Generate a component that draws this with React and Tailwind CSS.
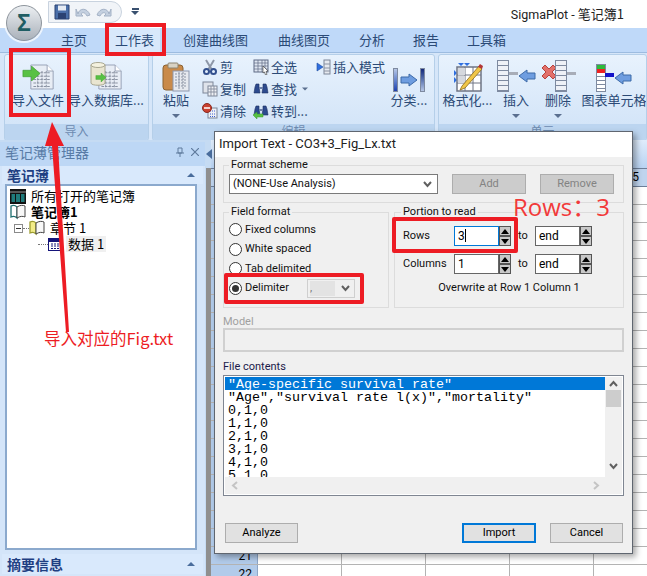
const cjk = { fontFamily: '"Noto Sans CJK SC","Noto Sans",sans-serif' };
const ui = { fontFamily: 'Roboto,"Noto Sans CJK SC",sans-serif' };

function Sheet({ w = 28, h = 30, className = "" }) {
  return (
    <svg width={w} height={h} viewBox="0 0 28 30" className={className}>
      <path d="M1 1h19l7 7v21H1z" fill="#e8edf5" stroke="#8d97ad" />
      <path d="M20 1v7h7" fill="#fff" stroke="#8d97ad" />
      <path d="M4 10h20M4 14h20M4 18h20M4 22h20M4 26h20M9 8v20M14 8v20M19 8v20" stroke="#8b93a3" strokeWidth="1.2" strokeDasharray="3 1" />
    </svg>
  );
}
function GreenArrow({ w = 16, h = 14 }) {
  return (
    <svg width={w} height={h} viewBox="0 0 16 14">
      <path d="M0 4h8V0l8 7-8 7v-4H0z" fill="#58c144" stroke="#3c9a2e" strokeWidth=".6" />
    </svg>
  );
}
function BlueLeft({ flip }) {
  return (
    <svg width="18" height="14" viewBox="0 0 18 14" className={flip ? "-scale-x-100" : ""}>
      <path d="M17 4H9V1L1 7l8 6v-3h8z" fill="#6e9de0" stroke="#3d6aa8" />
    </svg>
  );
}
function ImportIcon() {
  return (
    <div className="relative w-[32px] h-[30px]">
      <div className="absolute left-[8px] top-0"><Sheet w={24} h={30} /></div>
      <div className="absolute left-0 top-[4px]"><GreenArrow w={19} h={15} /></div>
    </div>
  );
}
function DbIcon() {
  return (
    <div className="relative w-[32px] h-[30px]">
      <div className="absolute left-[8px] top-0"><Sheet w={24} h={30} /></div>
      <svg className="absolute left-0 top-0" width="16" height="24" viewBox="0 0 16 24">
        <path d="M1 3v18c0 3 14 3 14 0V3z" fill="#e9e5d0" stroke="#a8a690" />
        <ellipse cx="8" cy="3" rx="7" ry="2.5" fill="#f4f1de" stroke="#a8a690" />
      </svg>
      <div className="absolute left-[5px] top-[11px]"><GreenArrow w={12} h={9} /></div>
    </div>
  );
}
function PasteIcon() {
  return (
    <svg width="28" height="30" viewBox="0 0 28 30">
      <rect x="1" y="3" width="20" height="25" rx="3" fill="#c98a4a" stroke="#8a6233" />
      <rect x="6" y="1" width="10" height="5" rx="1" fill="#d8d2c4" stroke="#8d8471" />
      <rect x="11" y="9" width="16" height="20" fill="#e6e9ef" stroke="#8d97ad" />
      <path d="M13 12h12M13 15h12M13 18h12M13 21h12M13 24h12M17 10v18M21 10v18" stroke="#8b93a3" strokeDasharray="2 1" />
    </svg>
  );
}
function Small({ kind }) {
  const p = { width: 16, height: 16, viewBox: "0 0 16 16" };
  if (kind === "cut")
    return (
      <svg {...p}>
        <path d="M4 1l6 10M12 1L6 11" stroke="#8e97a8" strokeWidth="2" />
        <circle cx="4.5" cy="12.5" r="2.5" fill="none" stroke="#33508e" strokeWidth="2" />
        <circle cx="11.5" cy="12.5" r="2.5" fill="none" stroke="#33508e" strokeWidth="2" />
      </svg>
    );
  if (kind === "copy")
    return (
      <svg {...p}>
        <rect x="1" y="1" width="10" height="11" fill="#dfe3ea" stroke="#7d8698" />
        <rect x="6" y="5" width="9" height="10" fill="#f0f2f6" stroke="#7d8698" />
        <path d="M6 8h9M6 11h9M9 5v10M12 5v10" stroke="#8b93a3" />
      </svg>
    );
  if (kind === "clear")
    return (
      <svg {...p}>
        <rect x="6" y="5" width="9" height="10" fill="#eef0f5" stroke="#7d8698" />
        <path d="M8 8h6M8 11h6M8 13.500h6" stroke="#3a5fd0" strokeDasharray="1 1" />
        <circle cx="5" cy="5" r="4.500" fill="#c9402f" stroke="#8a2a20" />
        <path d="M2 5h6" stroke="#fff" strokeWidth="1.600" />
      </svg>
    );
  if (kind === "all")
    return (
      <svg {...p}>
        <rect x="1" y="1" width="14" height="12" fill="#dfe6f2" stroke="#5e6b85" />
        <path d="M1 4h14M1 7h14M1 10h14M5 1v12M9 1v12M12 1v12" stroke="#5e6b85" strokeWidth=".7" />
        <path d="M10 7l5 5-2 .5 1 3-1.500.5-1-3-1.500 1z" fill="#fff" stroke="#333" strokeWidth=".6" />
      </svg>
    );
  if (kind === "find" || kind === "goto")
    return (
      <svg {...p}>
        <path d="M3 3h3v3l1 6H1l1-6zM10 3h3l1 3 1 6H9l1-6z" fill="#2c4a8e" stroke="#1d2f63" strokeWidth=".6" />
        <rect x="6" y="6" width="4" height="2" fill="#6c7fa8" />
        {kind === "goto" && <path d="M0 12l4-3v2h6v3H4v2z" fill="#58c144" stroke="#3c9a2e" strokeWidth=".5" />}
      </svg>
    );
  return (
    <svg {...p}>
      <rect x="9" y="1" width="6" height="14" fill="#e6e9ef" stroke="#7d8698" />
      <path d="M9 5h6M9 9h6M9 12h6" stroke="#8b93a3" />
      <path d="M2 4l6 4-6 4z" fill="#2f6fe0" stroke="#1d4a9c" strokeWidth=".6" />
    </svg>
  );
}
function Column({ n = 7, fill = "#eef1f7", children, w = 12 }) {
  return (
    <div className="flex flex-col border border-[#7e8aa0] bg-white" style={{ width: w }}>
      {Array.from({ length: n }).map((_, i) => (
        <div key={i} className="h-[5px] border-b border-[#7e8aa0]" style={{ background: fill }} />
      ))}
      {children}
    </div>
  );
}
function CaretDown({ className = "" }) {
  return <div className={`w-0 h-0 border-x-[4px] border-x-transparent border-t-[4px] border-t-[#5a6f8f] ${className}`} />;
}
function BigBtn({ icon, label, w, caret }) {
  return (
    <div className="flex flex-col items-center shrink-0" style={{ width: w }}>
      <div className="h-[37px] flex items-end justify-center">{icon}</div>
      <div className="text-[13px] leading-[18px] -mt-[1px] whitespace-nowrap text-[#2b4a76]" style={cjk}>{label}</div>
      {caret && <CaretDown className="mt-[5px]" />}
    </div>
  );
}
function SmallBtn({ kind, label, caret, w }) {
  return (
    <div className="flex items-center gap-[2px] h-[22px] whitespace-nowrap" style={{ width: w }}>
      <Small kind={kind} />
      <span className="text-[13px] text-[#2b4a76]" style={cjk}>{label}</span>
      {caret && <CaretDown className="scale-75 ml-[2px]" />}
    </div>
  );
}
function Group({ w, caption, children, className = "" }) {
  return (
    <div className="shrink-0 h-[87px] rounded-[3px] border border-[#b5cfe9] bg-gradient-to-b from-[#e8f2fd] to-[#cfe2f7] flex flex-col overflow-hidden" style={{ width: w }}>
      <div className={`h-[70px] flex ${className}`}>{children}</div>
      <div className="h-[16px] bg-[#bcd5f0] text-center text-[12px] leading-[14px] text-[#6d8bb0]" style={cjk}>{caption}</div>
    </div>
  );
}

function Ribbon() {
  return (
    <div className="h-[88px] bg-[#d6e6f9] flex gap-[3px] pl-[4px] pt-[1px] border-t border-[#9dbce0]">
      <Group w={145} caption="导入" className="pl-[3px]">
        <BigBtn icon={<ImportIcon />} label="导入文件" w={60} />
        <BigBtn icon={<DbIcon />} label="导入数据库..." w={76} />
      </Group>
      <Group w={283} caption="编辑" className="pl-[10px]">
        <BigBtn icon={<PasteIcon />} label="粘贴" w={26} caret />
        <div className="flex flex-col ml-[13px] pt-[1px]">
          <SmallBtn kind="cut" label="剪" w={51} />
          <SmallBtn kind="copy" label="复制" w={51} />
          <SmallBtn kind="clear" label="清除" w={51} />
        </div>
        <div className="flex flex-col pt-[1px]">
          <SmallBtn kind="all" label="全选" w={62} />
          <SmallBtn kind="find" label="查找" caret w={62} />
          <SmallBtn kind="goto" label="转到..." w={62} />
        </div>
        <div className="flex flex-col pt-[1px]">
          <SmallBtn kind="insert" label="插入模式" w={76} />
        </div>
        <BigBtn
          w={36}
          label="分类..."
          icon={
            <div className="flex items-center gap-[2px]">
              <div className="w-[5px] h-[24px] bg-gradient-to-b from-[#b6c6e6] to-[#1f3fb0] border border-[#7e8aa0]" />
              <BlueLeft flip />
              <div className="w-[5px] h-[24px] bg-gradient-to-b from-[#14277a] to-[#b6c6e6] border border-[#7e8aa0]" />
            </div>
          }
        />
      </Group>
      <Group w={209} caption="单元" className="pl-[4px]">
        <BigBtn
          w={49}
          label="格式化..."
          icon={
            <svg width="30" height="30" viewBox="0 0 30 30">
              <path d="M5 1l3 3 3-3zM11 1l3 3 3-3zM1 8l3 3-3 3zM1 15l3 3-3 3z" fill="#2f6fe0" />
              <rect x="4" y="5" width="24" height="24" fill="#fff" stroke="#6e7484" strokeWidth="1.500" />
              <path d="M4 13h24M4 21h24M12 5v24M20 5v24" stroke="#6e7484" />
              <path d="M5 6h7v7H5zM5 14h7v7H5z" fill="#d5d8de" />
              <path d="M9 24L26 4l3 3-17 19-5 2z" fill="#f0c648" stroke="#8a6a1a" strokeWidth=".8" />
              <path d="M25 5l2-3 3 2-1 3z" fill="#b23636" />
            </svg>
          }
        />
        <BigBtn
          w={48}
          label="插入"
          caret
          icon={
            <div className="flex items-center">
              <Column n={6} />
              <div className="w-[9px] h-[3px] bg-[#a8adb8] -mt-[5px]" />
              <BlueLeft />
            </div>
          }
        />
        <BigBtn
          w={36}
          label="删除"
          caret
          icon={
            <div className="flex items-center">
              <svg width="16" height="16" viewBox="0 0 16 16" className="-mr-[2px] -mt-[8px]">
                <path d="M1 4l3-3 4 4 4-4 3 3-4 4 4 4-3 3-4-4-4 4-3-3 4-4z" fill="#e2706a" stroke="#b8423c" />
              </svg>
              <Column n={6} />
              <div className="w-[9px] h-[3px] bg-[#a8adb8] -mt-[5px]" />
            </div>
          }
        />
        <BigBtn
          w={76}
          label="图表单元格"
          icon={
            <div className="flex items-center">
              <div className="flex flex-col border border-[#7e8aa0] w-[10px] bg-white">
                <div className="h-[4px] bg-[#2dbb3c]" />
                <div className="h-[4px] bg-[#e22]" />
                <div className="h-[18px] bg-[repeating-linear-gradient(#fff_0_3px,#7e8aa0_3px_4px)]" />
              </div>
              <div className="w-[9px] h-[4px] bg-[#1414c8] -ml-[1px] -mt-[6px]" />
              <BlueLeft />
            </div>
          }
        />
      </Group>
    </div>
  );
}

function Tree() {
  const Book = ({ c = "#2a7f7f" }) => (
    <svg width="16" height="16" viewBox="0 0 16 16">
      <path d="M1 2c2-1 4-1 6 1v11c-2-2-4-2-6-1z" fill={c === "y" ? "#f2ec88" : "#fff"} stroke={c === "y" ? "#9c9c30" : "#1c6f6f"} strokeWidth="1.300" />
      <path d="M15 2c-2-1-5-1-8 1v11c3-2 6-2 8-1z" fill="#f8f8f8" stroke="#444" />
    </svg>
  );
  return (
    <div className="h-[366px] mx-[5px] w-[192px] border-2 border-[#8ba9cd] bg-white pt-[2px] text-[13px] leading-[16px] text-black" style={cjk}>
      <div className="flex items-center h-[16px] pl-[3px] gap-[5px]">
        <svg width="16" height="15" viewBox="0 0 16 15">
          <rect x="0" y="0" width="16" height="15" fill="#111" />
          <path d="M1.500 5h3.500v8H1.500zM6 5h4v8H6zM11 5h3.500v8H11z" fill="#1f7a7a" />
          <path d="M0 3h16" stroke="#999" />
        </svg>
        <span>所有打开的笔记簿</span>
      </div>
      <div className="flex items-center h-[16px] pl-[3px] gap-[5px]">
        <Book />
        <span className="font-bold">笔记簿1</span>
      </div>
      <div className="flex items-center h-[16px] pl-[7px]">
        <div className="w-[9px] h-[9px] border border-[#8a8a8a] flex items-center justify-center"><div className="w-[5px] h-px bg-[#333]" /></div>
        <div className="w-[6px] border-t border-dotted border-[#777]" />
        <Book c="y" />
        <span className="ml-[5px]">章节 1</span>
      </div>
      <div className="flex items-center h-[16px] pl-[31px]">
        <div className="w-[10px] border-t border-dotted border-[#777]" />
        <svg width="15" height="13" viewBox="0 0 15 13">
          <rect x=".5" y=".5" width="14" height="12" fill="#fff" stroke="#14147a" />
          <path d="M1 1h13v3H1z" fill="#14147a" />
          <path d="M3 6h9M3 8h9M3 10.500h9" stroke="#14147a" strokeDasharray="2 1" />
        </svg>
        <span className="ml-[3px] bg-[#f0f0f0] px-[2px]">数据 1</span>
      </div>
    </div>
  );
}

function LeftPanel() {
  return (
    <div className="w-[205px] shrink-0 bg-[#d4e5f9] flex flex-col border-t-[2px] border-[#c5dbf3]">
      <div className="h-[24px] flex items-start pt-[1px] justify-between pl-[5px] pr-[6px] bg-[#bdd7f5]">
        <span className="text-[14px] leading-[18px] text-[#587ba6]" style={cjk}>笔记薄管理器</span>
        <span className="flex items-center gap-[7px] mt-[4px] text-[#6b87a9]">
          <svg width="8" height="10" viewBox="0 0 8 10"><path d="M2 1h4v5H2zM0 6h8M4 6v4" fill="none" stroke="#5f7a9c" /></svg>
          <svg width="8" height="8" viewBox="0 0 8 8"><path d="M0 0l8 8M8 0L0 8" stroke="#5f7a9c" strokeWidth="1.200" /></svg>
        </span>
      </div>
      <div className="h-[18px] mx-[2px] flex items-center justify-between pl-[5px] pr-[8px] bg-[#d9e9fc]">
        <span className="text-[14px] font-bold text-[#1f3f82]" style={cjk}>笔记薄</span>
        <div className="w-0 h-0 border-x-[4px] border-x-transparent border-b-[4px] border-b-[#4a6d9c]" />
      </div>
      <Tree />
      <div className="mt-[4px] h-[20px] mx-[2px] flex items-center justify-between pl-[5px] pr-[8px] bg-[#d9e9fc] overflow-hidden">
        <span className="text-[14px] leading-[18px] font-bold text-[#1f3f82]" style={cjk}>摘要信息</span>
        <div className="w-0 h-0 border-x-[4px] border-x-transparent border-b-[4px] border-b-[#4a6d9c]" />
      </div>
    </div>
  );
}

function SheetArea() {
  const cols = [84, 84, 84, 84, 84];
  const rows = Array.from({ length: 22 }, (_, i) => i + 1);
  return (
    <div className="flex-1 flex min-w-0 bg-[#c5dbf3] overflow-hidden">
      <div className="w-[5px] shrink-0 bg-[#8f8f8f] ml-[1px] mt-[28px]" />
      <div className="flex-1 min-w-0 flex flex-col">
        <div className="h-[28px] bg-gradient-to-b from-[#dfecfb] to-[#b9d3f2] shrink-0 flex items-center">
          <div className="-ml-[5px] w-0 h-0 border-y-[5px] border-y-transparent border-r-[6px] border-r-[#4a6d9c]" />
        </div>
        <div className="flex h-[19px] shrink-0 bg-[#bfd4ee] border-y border-[#6d7f99]">
          <div className="w-[47px] shrink-0 border-r border-[#8da6c7]" />
          {cols.map((w, i) => (
            <div key={i} className="shrink-0 border-r border-[#8da6c7] text-[12px] leading-[17px] text-center text-black" style={{ width: w, ...ui }}>{i + 1}</div>
          ))}
        </div>
        <div className="bg-white flex-1">
          {rows.map((r) => (
            <div key={r} className="flex h-[18px] border-b border-[#b3b3b3]">
              <div className="w-[47px] shrink-0 bg-[#b2cbea] border-r border-[#8da6c7] text-right pr-[5px] text-[12px] leading-[18px] text-black" style={ui}>{r}</div>
              {cols.map((w, i) => (
                <div key={i} className="shrink-0 border-r border-[#b3b3b3]" style={{ width: w }} />
              ))}
            </div>
          ))}
        </div>
      </div>
    </div>
  );
}

function Radio({ on, label }) {
  return (
    <div className="flex items-center h-[19.500px] gap-[3px] w-[78px] whitespace-nowrap">
      <div className="w-[13px] h-[13px] shrink-0 rounded-full border border-[#333] bg-white flex items-center justify-center">
        {on && <div className="w-[7px] h-[7px] rounded-full bg-[#333]" />}
      </div>
      <span className="text-[11px] text-[#111]">{label}</span>
    </div>
  );
}
function Spin() {
  const Tri = ({ up }) => (
    <div className="flex-1 bg-[#c8c8c8] border border-[#555] flex items-center justify-center">
      <div className={`w-0 h-0 border-x-[4px] border-x-transparent ${up ? "border-b-[5px] border-b-black" : "border-t-[5px] border-t-black"}`} />
    </div>
  );
  return (
    <div className="w-[12px] h-[20px] flex flex-col">
      <Tri up />
      <Tri />
    </div>
  );
}
function SpinInput({ value, focus, caret, mr }) {
  return (
    <div className="flex" style={{ marginRight: mr }}>
      <div className={`w-[45px] h-[20px] bg-white border pl-[3px] text-[12px] leading-[18px] text-black ${focus ? "border-[#0078d7]" : "border-[#666]"}`}>
        {value}
        {caret && <span className="inline-block w-px h-[13px] bg-black align-[-2px]" />}
      </div>
      <Spin />
    </div>
  );
}
function Legend({ children, className = "ml-0" }) {
  return <legend className={`px-[2px] text-[11px] leading-[14px] text-[#111] ${className}`}>{children}</legend>;
}
function Btn({ children, w, primary, disabled }) {
  return (
    <div
      className={`h-[20px] flex items-center justify-center text-[11px] ${primary ? "border-2 border-[#0078d7] bg-[#e1e1e1] text-black" : disabled ? "border border-[#adadad] bg-[#cccccc] text-[#838383]" : "border border-[#adadad] bg-[#e1e1e1] text-black"}`}
      style={{ width: w }}
    >
      {children}
    </div>
  );
}
function Chev({ d }) {
  return (
    <svg width="9" height="7" viewBox="0 0 9 7" fill="none">
      <path d={d} stroke="#606060" strokeWidth="2" />
    </svg>
  );
}

function Dialog() {
  const lines = ['"Age-specific survival rate"', '"Age","survival rate l(x)","mortality"', "0,1,0", "1,1,0", "2,1,0", "3,1,0", "4,1,0", "5,1,0"];
  return (
    <div className="absolute left-[214px] top-[131px] w-[419px] h-[423px] bg-[#f0f0f0] border border-[#5f6670] shadow-[3px_3px_6px_rgba(0,0,0,0.35)]" style={ui}>
      <div className="h-[25px] bg-white pl-[4px] text-[13px] leading-[23px] text-[#222]">Import Text - CO3+3_Fig_Lx.txt</div>
      <div className="px-[8px] pt-[1px]">
        <fieldset className="h-[45px] w-[401px] border border-[#dcdcdc] px-[5px]">
          <Legend>Format scheme</Legend>
          <div className="flex items-center pt-[2px]">
            <div className="w-[209px] h-[20px] bg-white border border-[#7a7a7a] flex items-center justify-between pl-[3px] pr-[5px] text-[11px] text-[#111]">
              (NONE-Use Analysis)
              <Chev d="M1 1l3.500 4L8 1" />
            </div>
            <div className="ml-[14px]"><Btn w={74} disabled>Add</Btn></div>
            <div className="ml-[14px]"><Btn w={74} disabled>Remove</Btn></div>
          </div>
        </fieldset>
        <div className="flex gap-[5px] mt-[2px]">
          <fieldset className="w-[166px] h-[103px] border border-[#dcdcdc] pl-[5px] pt-px">
            <Legend>Field format</Legend>
            <Radio label="Fixed columns" />
            <Radio label="White spaced" />
            <Radio label="Tab delimited" />
            <div className="flex items-center">
              <Radio on label="Delimiter" />
              <div className="w-[48px] h-[19px] bg-[#f0f0f0] border border-[#cfcfcf] flex items-center justify-between pl-[2px] pr-[4px]">
                <div className="w-[25px] h-[15px] bg-[#e3e3e3] text-[11px] leading-[14px] text-[#777]">,</div>
                <Chev d="M1 1l3.500 4L8 1" />
              </div>
            </div>
          </fieldset>
          <fieldset className="w-[230px] h-[103px] border border-[#dcdcdc] pl-[8px]">
            <Legend className="-ml-[2px]">Portion to read</Legend>
            <div className="flex items-center h-[20px] mt-[7px] text-[11px] text-[#111]">
              <span className="w-[51px]">Rows</span>
              <SpinInput value="3" focus caret />
              <span className="w-[24px] text-center">to</span>
              <SpinInput value="end" />
            </div>
            <div className="flex items-center h-[20px] mt-[8px] text-[11px] text-[#111]">
              <span className="w-[51px]">Columns</span>
              <SpinInput value="1" />
              <span className="w-[24px] text-center">to</span>
              <SpinInput value="end" />
            </div>
            <div className="text-center text-[11px] leading-[16px] text-[#111] mt-[6px] pr-[8px]">Overwrite at Row 1 Column 1</div>
          </fieldset>
        </div>
        <div className="text-[11px] leading-[14px] text-[#a0a0a0] mt-[7px]">Model</div>
        <div className="w-[401px] h-[24px] border-2 border-[#d0d0d0] -mt-[1px] bg-[#f0f0f0]" />
        <div className="text-[11px] leading-[14px] text-[#1a1a4a] mt-[8px]">File contents</div>
        <div className="w-[401px] h-[121px] border border-[#7f8692] mt-[1px] bg-white flex flex-col p-px">
          <div className="flex flex-1 min-h-0">
            <div className="flex-1 h-[101px] overflow-hidden text-[13.330px] leading-[15px] text-black whitespace-pre" style={{ fontFamily: '"Liberation Mono",monospace' }}>
              {lines.map((l, i) => (
                <div key={i} className={`pl-[3px] h-[13px] ${i === 0 ? "bg-[#0078d7] text-white" : ""}`}>{l}</div>
              ))}
            </div>
            <div className="w-[17px] bg-[#f0f0f0] flex flex-col items-center pt-[3px]">
              <Chev d="M1 6l3.500-4L8 6" />
              <div className="w-[15px] h-[17px] bg-[#cdcdcd] mt-[3px]" />
              <div className="flex-1" />
              <Chev d="M1 1l3.500 4L8 1" />
              <div className="h-[7px]" />
            </div>
          </div>
          <div className="h-[17px] bg-[#f0f0f0] flex items-center justify-between pl-[6px] pr-[22px]">
            <svg width="7" height="9" viewBox="0 0 7 9" fill="none"><path d="M6 1L2 4.500 6 8" stroke="#c4c4c4" strokeWidth="2" /></svg>
            <svg width="7" height="9" viewBox="0 0 7 9" fill="none"><path d="M1 1l4 3.500L1 8" stroke="#c4c4c4" strokeWidth="2" /></svg>
          </div>
        </div>
        <div className="flex items-center mt-[27px] pl-[2px]">
          <Btn w={73}>Analyze</Btn>
          <div className="ml-[164px]"><Btn w={74} primary>Import</Btn></div>
          <div className="ml-[14px]"><Btn w={73}>Cancel</Btn></div>
        </div>
      </div>
    </div>
  );
}

function Tab({ children, className = "" }) {
  return <div className={`h-[24px] text-[13px] leading-[24px] whitespace-nowrap text-[#2b4a76] ${className}`}>{children}</div>;
}

export default function App() {
  return (
    <div className="relative w-[647px] h-[576px] overflow-hidden bg-white flex flex-col" style={cjk}>
      <div className="h-[28px] shrink-0 bg-white flex items-center">
        <div className="ml-[48px] w-[74px] h-[22px] -mt-[5px] rounded-r-[11px] border border-[#c9d3df] bg-[#f1f4f8] flex items-center gap-[5px] pl-[5px]">
          <svg width="16" height="16" viewBox="0 0 16 16">
            <path d="M1 1h14v14H1z" fill="#4a6ea8" stroke="#2b4272" />
            <rect x="4" y="1.500" width="8" height="5" fill="#e6ebf3" />
            <rect x="4" y="9" width="8" height="6" fill="#2b4272" />
          </svg>
          <svg width="16" height="13" viewBox="0 0 16 13"><path d="M3 9c1-6 9-7 12 1l-3 1C10 7 7 7 6 9l2 2H1V4z" fill="#c4d0e0" stroke="#a4b2c6" /></svg>
          <svg width="16" height="13" viewBox="0 0 16 13"><path d="M13 9C12 3 4 2 1 10l3 1c2-4 5-4 6-2l-2 2h7V4z" fill="#c4d0e0" stroke="#a4b2c6" /></svg>
        </div>
        <div className="ml-[9px] -mt-[5px] flex flex-col items-center gap-[1px]">
          <div className="w-[7px] h-[2px] bg-[#39506f]" />
          <div className="w-0 h-0 border-x-[4px] border-x-transparent border-t-[4px] border-t-[#39506f]" />
        </div>
        <div className="ml-auto mr-[23px] text-[12.500px] text-[#222]" style={ui}>
          SigmaPlot - <span className="text-[13px]" style={cjk}>笔记簿1</span>
        </div>
      </div>
      <div className="h-[24px] shrink-0 bg-[#bfd9f9] flex pl-[61px]">
        <Tab>主页</Tab>
        <Tab className="ml-[22px] px-[6px] bg-[#d8e8fb]">工作表</Tab>
        <Tab className="ml-[23px]">创建曲线图</Tab>
        <Tab className="ml-[30px]">曲线图页</Tab>
        <Tab className="ml-[29px]">分析</Tab>
        <Tab className="ml-[28px]">报告</Tab>
        <Tab className="ml-[28px]">工具箱</Tab>
      </div>
      <Ribbon />
      <div className="flex-1 min-h-0 flex">
        <LeftPanel />
        <SheetArea />
      </div>

      {/* Application button */}
      <div className="absolute left-[6px] top-[5px] w-[36px] h-[36px] rounded-full bg-gradient-to-b from-[#eceff2] to-[#aab1ba] border border-[#8d949c] shadow-[0_0_0_2px_rgba(255,255,255,0.7)] flex items-center justify-center text-[23px] font-bold leading-none text-[#1f5d63]" style={{ fontFamily: '"Liberation Sans",sans-serif' }}>Σ</div>

      <Dialog />

      {/* Red annotations */}
      <div className="absolute left-[105px] top-[23px] w-[61px] h-[33px] border-[4px] border-[#ed1c24]" />
      <div className="absolute left-[9px] top-[48px] w-[62px] h-[69px] border-[4px] border-[#ed1c24]" />
      <div className="absolute left-[392px] top-[217px] w-[126px] h-[36px] border-[4px] border-[#ed1c24] rounded-[2px]" />
      <div className="absolute left-[224px] top-[273px] w-[140px] h-[31px] border-[4px] border-[#ed1c24] rounded-[2px]" />
      <div className="absolute left-[513px] top-[192px] text-[24px] leading-[30px] text-[#f23a3a] whitespace-nowrap" style={{ fontFamily: '"Open Sans","Noto Sans CJK SC",sans-serif' }}>Rows：3</div>
      <div className="absolute left-[44px] top-[327px] text-[16.500px] leading-[22px] text-[#ed1c24] whitespace-nowrap" style={cjk}>导入对应的Fig.txt</div>
      <svg className="absolute left-0 top-0 pointer-events-none" width="120" height="345" viewBox="0 0 120 345">
        <path d="M52 122L64 146 58 146 69 332 66 332 52 146 45 146z" fill="#ed1c24" />
      </svg>
    </div>
  );
}
